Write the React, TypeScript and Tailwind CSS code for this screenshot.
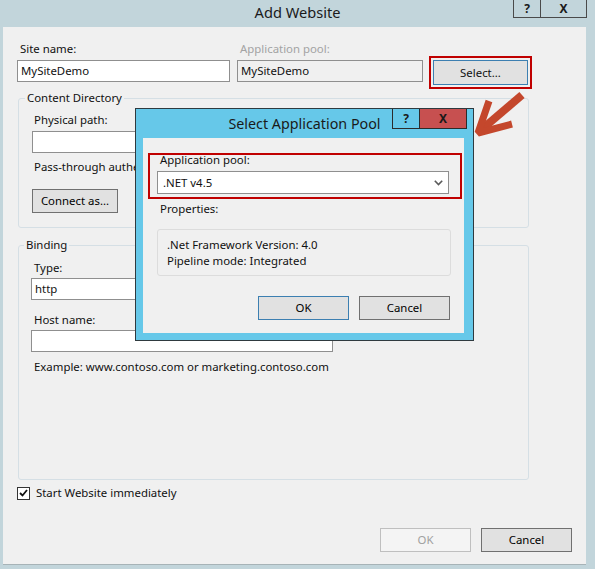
import { ReactNode } from "react";

type BtnProps = {
    label: string
    width: string
    variant?: "normal" | "default" | "disabled"
}

// plain Windows 8 push button
function WinButton({ label, width, variant = "normal" }: BtnProps) {
    const look =
        variant === "default"
            ? "border-[#3c7fb1] bg-[#e1e1e1] text-black"
            : variant === "disabled"
            ? "border-[#bfbfbf] bg-[#f4f4f4] text-[#a0a0a0]"
            : "border-[#707070] bg-[#e1e1e1] text-black";
    return (
        <div className={`${width} h-[24px] border flex items-center justify-center ${look}`}>
            {label}
        </div>
    );
}

function TextBox({ value, className }: { value?: string; className: string }) {
    return (
        <div className={`h-[22px] border border-[#8f8f8f] flex items-center pl-[3px] ${className}`}>
            {value}
        </div>
    );
}

function Chevron() {
    return (
        <svg width="9" height="6" viewBox="0 0 9 6" className="mr-[5px]">
            <path d="M0.8 0.8 L4.5 4.6 L8.2 0.8" fill="none" stroke="#5a5a5a" strokeWidth="1.6" />
        </svg>
    );
}

// the legend sits after the fieldset's left padding, so it is pulled back
function Group({ title, className, children }: { title: string; className: string; children: ReactNode }) {
    return (
        <fieldset className={`border border-[#d5dfe5] rounded-[3px] ${className}`}>
            <legend className="-ml-[7px] px-[2px] leading-[16px]">{title}</legend>
            {children}
        </fieldset>
    );
}

function SelectPoolDialog() {
    return (
        <div className="absolute left-[135px] top-[108px] w-[339px] h-[233px] border border-[#2f3a3f] bg-[#66c8e9]">
            {/* caption */}
            <div className="relative h-[29px] flex items-center justify-center text-[14.3px] text-[#1a1a1a]">
                Select Application Pool
                <div className="absolute left-[256px] top-0 flex font-bold text-[12px]">
                    <div className="w-[28px] h-[20px] border border-t-0 border-[#2b2b2b] flex items-center justify-center">?</div>
                    <div className="w-[47px] h-[20px] border border-t-0 border-l-0 border-[#2b2b2b] bg-[#c75050] flex items-center justify-center">X</div>
                </div>
            </div>
            <div className="ml-[7px] w-[321px] h-[195px] bg-[#f0f0f0] flex flex-col">
                <div className="ml-[5px] mt-[15px] w-[314px] h-[46px] border-2 border-[#c00000] flex flex-col">
                    <div className="-mt-[3px] pl-[10px] leading-[16px]">Application pool:</div>
                    <div className="ml-[7px] mt-[3px] w-[292px] h-[23px] border border-[#8f8f8f] bg-white flex items-center justify-between pl-[5px]">
                        .NET v4.5
                        <Chevron />
                    </div>
                </div>
                <div className="mt-[2px] pl-[17px] leading-[16px]">Properties:</div>
                <div className="ml-[14px] mt-[12px] w-[294px] h-[47px] border border-[#dcdcdc] rounded-[3px] pt-[7px] pl-[9px] leading-[16px]">
                    <div>.Net Framework Version: 4.0</div>
                    <div>Pipeline mode: Integrated</div>
                </div>
                <div className="mt-[20px] pr-[14px] flex justify-end gap-[10px]">
                    <WinButton label="OK" width="w-[91px]" variant="default" />
                    <WinButton label="Cancel" width="w-[91px]" />
                </div>
            </div>
        </div>
    );
}

function PointerArrow() {
    return (
        <svg className="absolute left-[468px] top-[88px]" width="60" height="55" viewBox="0 0 60 55">
            <path d="M54 7 L13 42" stroke="#c4472c" strokeWidth="8" fill="none" />
            <path d="M21 13 L10 45 L44 36" stroke="#c4472c" strokeWidth="7" fill="none" strokeLinejoin="miter" strokeMiterlimit="2" />
        </svg>
    );
}

export default function App() {
    return (
        <div className="relative w-[595px] h-[569px] bg-[#c2d5db] overflow-hidden font-['Noto_Sans',sans-serif] text-[11.4px] text-[#111]">
            {/* window caption */}
            <div className="relative h-[27px] flex justify-center pt-[2px] text-[14.6px] text-[#1a1a1a]">
                Add Website
                <div className="absolute left-[513px] top-0 flex font-bold text-[12px]">
                    <div className="w-[28px] h-[18px] border border-t-0 border-[#4a4a4a] flex items-center justify-center">?</div>
                    <div className="w-[46px] h-[18px] border border-t-0 border-l-0 border-[#4a4a4a] flex items-center justify-center">X</div>
                </div>
            </div>

            <div className="ml-[3px] w-[583px] h-[538px] bg-[#f0f0f0] border-b border-[#a7b3b7] flex flex-col pl-[14px] pt-[14px] leading-[16px]">
                <div className="flex items-start">
                    <div className="w-[213px] flex flex-col">
                        <div className="pl-[3px]">Site name:</div>
                        <TextBox value="MySiteDemo" className="mt-[3px] bg-white" />
                    </div>
                    <div className="ml-[7px] w-[186px] flex flex-col">
                        <div className="pl-[3px] text-[#a3a3a3]">Application pool:</div>
                        <TextBox value="MySiteDemo" className="mt-[3px] bg-[#f0f0f0]" />
                    </div>
                    <div className="ml-[6px] mt-[15px] border-2 border-[#c00000] p-[2px]">
                        <div className="w-[95px] h-[25px] border border-[#3c7fb1] bg-[#e1e1e1] flex items-center justify-center">
                            Select...
                        </div>
                    </div>
                </div>

                <Group title="Content Directory" className="ml-[1px] mt-[1px] w-[511px] pl-[13px] pt-[6px] pb-[14px]">
                    <div className="pl-[2px]">Physical path:</div>
                    <div className="mt-[3px] flex gap-[8px]">
                        <TextBox className="w-[400px] bg-white" />
                        <WinButton label="..." width="w-[26px]" />
                    </div>
                    <div className="mt-[4px] pl-[2px]">Pass-through authentication</div>
                    <div className="mt-[14px]">
                        <WinButton label="Connect as..." width="w-[86px]" />
                    </div>
                </Group>

                <Group title="Binding" className="ml-[1px] mt-[9px] w-[511px] h-[243px] pl-[12px] pt-[7px]">
                    <div className="pl-[3px]">Type:</div>
                    <div className="mt-[2px] w-[120px] h-[22px] border border-[#8f8f8f] bg-white flex items-center justify-between pl-[3px]">
                        http
                        <Chevron />
                    </div>
                    <div className="mt-[12px] pl-[3px]">Host name:</div>
                    <TextBox className="mt-[2px] w-[302px] bg-white" />
                    <div className="mt-[7px] pl-[3px]">Example: www.contoso.com or marketing.contoso.com</div>
                </Group>

                <div className="mt-[5px] flex items-center gap-[6px]">
                    <div className="w-[13px] h-[13px] border border-[#333] bg-white flex items-center justify-center">
                        <svg width="9" height="8" viewBox="0 0 9 8">
                            <path d="M1 4 L3.5 6.5 L8 1" fill="none" stroke="#111" strokeWidth="1.8" />
                        </svg>
                    </div>
                    Start Website immediately
                </div>

                <div className="mt-[27px] pr-[14px] flex justify-end gap-[10px]">
                    <WinButton label="OK" width="w-[91px]" variant="disabled" />
                    <WinButton label="Cancel" width="w-[91px]" />
                </div>
            </div>

            <SelectPoolDialog />
            <PointerArrow />
        </div>
    );
}
